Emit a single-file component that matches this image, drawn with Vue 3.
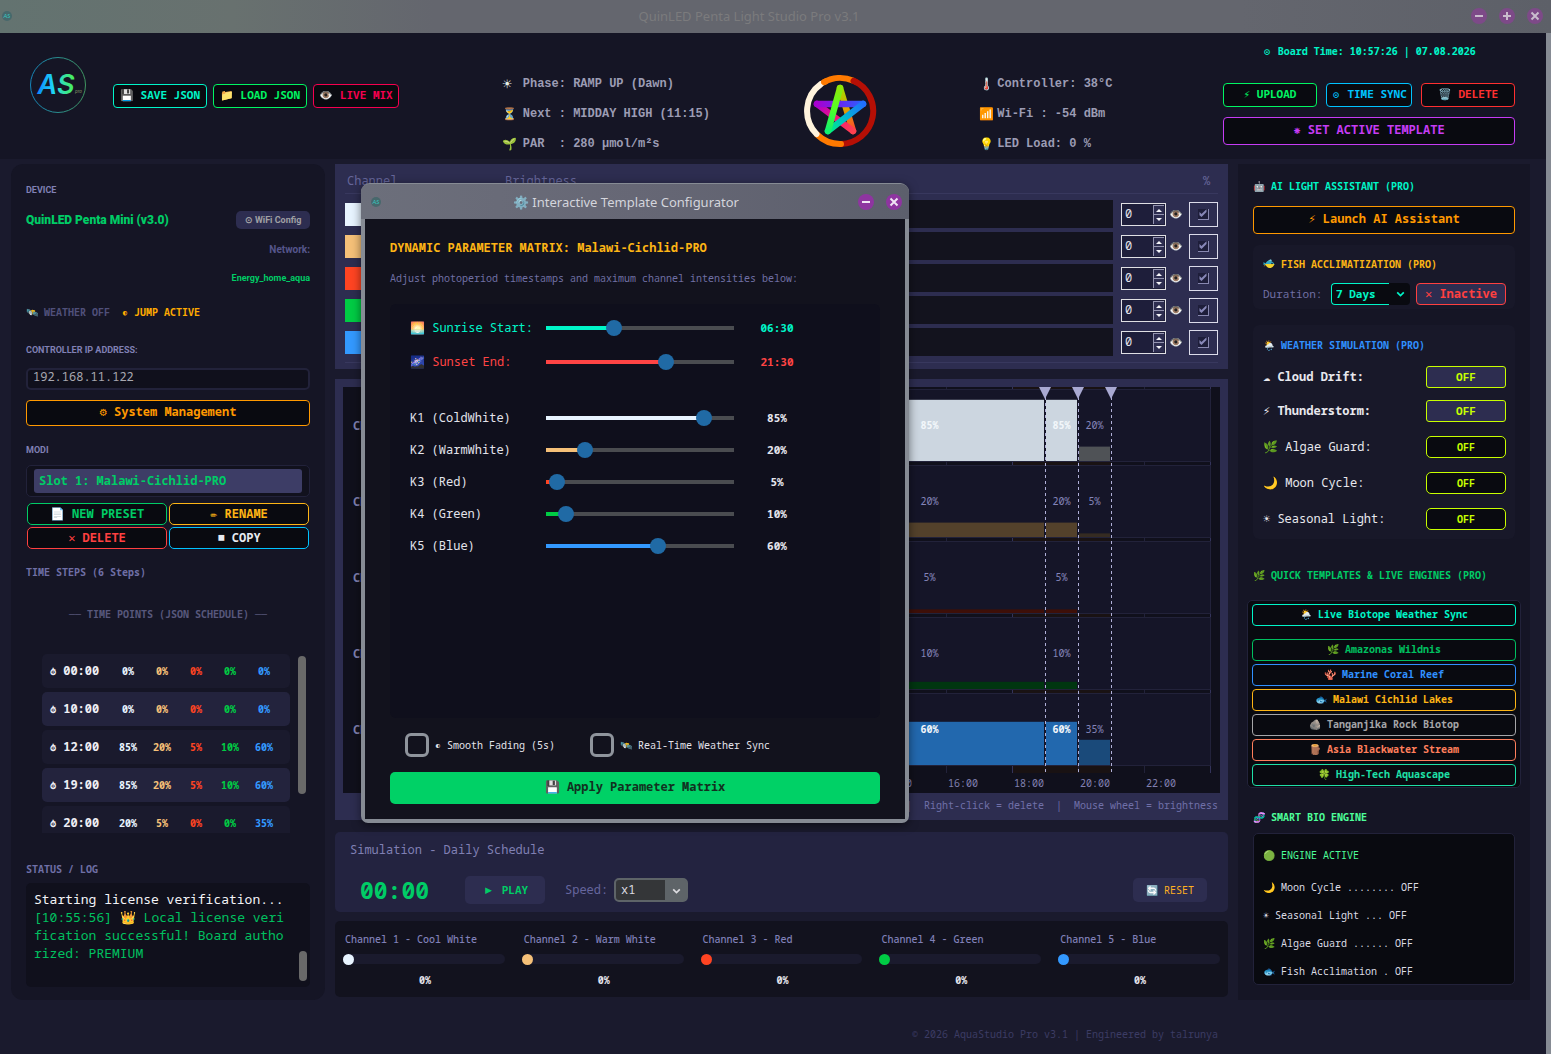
<template>
  <div class="window">
    <header class="titlebar">
      <svg class="mini-logo" viewBox="0 0 12 12">
        <circle cx="6" cy="6" r="5" fill="#47686c" />
        <text x="6" y="8" text-anchor="middle" font-size="6" fill="#35c9c4">AS</text>
      </svg>
      <h1>QuinLED Penta Light Studio Pro v3.1</h1>
      <div class="win-controls">
        <button aria-label="Minimize">
          <svg viewBox="0 0 16 16"><path d="M4 8h8" /></svg>
        </button>
        <button aria-label="Maximize">
          <svg viewBox="0 0 16 16"><path d="M4 8h8M8 4v8" /></svg>
        </button>
        <button aria-label="Close">
          <svg viewBox="0 0 16 16"><path d="M4.500 4.500l7 7M11.500 4.500l-7 7" /></svg>
        </button>
      </div>
    </header>

    <div class="app">
      <section class="topbar">
        <div class="brand">
          <svg class="logo" viewBox="0 0 56 56">
            <defs>
              <linearGradient id="ring" x1="0" x2="1">
                <stop offset="0" stop-color="#1583b8" />
                <stop offset="1" stop-color="#3f9560" />
              </linearGradient>
              <linearGradient id="mark" x1="0" x2="1">
                <stop offset="0" stop-color="#0a84ff" />
                <stop offset=".45" stop-color="#1fd6f5" />
                <stop offset="1" stop-color="#4df04d" />
              </linearGradient>
            </defs>
            <circle cx="28" cy="28" r="27.500" fill="none" stroke="url(#ring)" />
            <text class="logo-mark" x="26" y="37" text-anchor="middle" fill="url(#mark)">AS</text>
            <text class="logo-sub" x="45" y="36" fill="#7a8a60">pro</text>
          </svg>
          <div class="file-buttons">
            <button class="outline" style="--c: #00f5c8">💾 SAVE JSON</button>
            <button class="outline" style="--c: #00f562">📁 LOAD JSON</button>
            <button class="outline" style="--c: #f5004f">👁️ LIVE MIX</button>
          </div>
        </div>

        <dl class="status status-left">
          <div><dt>☀︎</dt><dd>Phase: RAMP UP (Dawn)</dd></div>
          <div><dt>⏳</dt><dd>Next : MIDDAY HIGH (11:15)</dd></div>
          <div><dt>🌱</dt><dd>PAR&nbsp; : 280 µmol/m²s</dd></div>
        </dl>

        <svg class="star" viewBox="0 0 74 74">
          <defs>
            <linearGradient
              v-for="g in starLines"
              :id="g.id"
              :key="g.id"
              gradientUnits="userSpaceOnUse"
              :x1="g.x1" :y1="g.y1" :x2="g.x2" :y2="g.y2"
            >
              <stop offset="0" :stop-color="g.from" />
              <stop offset=".5" :stop-color="g.mid" />
              <stop offset="1" :stop-color="g.to" />
            </linearGradient>
          </defs>
          <g fill="none" stroke-width="6" stroke-linecap="round">
            <path d="M50.500 6.800A33 33 0 0 1 38 70" stroke="#b50f05" />
            <path d="M38 70A33 33 0 0 1 14 60.500" stroke="#ff7a00" />
            <path d="M20 8.800A33 33 0 0 1 50.500 6.800" stroke="#ff7a00" stroke-linecap="butt" />
            <path d="M13.500 60A33 33 0 0 1 18 10" stroke="#fff3dd" />
            <path d="M21 8.200l2-1" stroke="#ff7a00" />
            <path d="M50.500 6.800l3 1.500" stroke="#b50f05" />
          </g>
          <g stroke-width="6.500" stroke-linecap="round">
            <line
              v-for="g in starLines"
              :key="g.id"
              :x1="g.x1" :y1="g.y1" :x2="g.x2" :y2="g.y2"
              :stroke="`url(#${g.id})`"
            />
          </g>
        </svg>

        <dl class="status status-right">
          <div><dt>🌡️</dt><dd>Controller: 38°C</dd></div>
          <div><dt>📶</dt><dd>Wi-Fi : -54 dBm</dd></div>
          <div><dt>💡</dt><dd>LED Load: 0 %</dd></div>
        </dl>

        <div class="board">
          <p class="board-time"><span class="glyph">⊙</span> Board Time: 10:57:26 | 07.08.2026</p>
          <div class="board-buttons">
            <button class="outline" style="--c: #00f562">⚡︎ UPLOAD</button>
            <button class="outline" style="--c: #00c3ff"><span class="glyph">⊙</span> TIME SYNC</button>
            <button class="outline" style="--c: #ff3030">🗑️ DELETE</button>
          </div>
          <button class="outline active-template" style="--c: #c63cf5">⁕ SET ACTIVE TEMPLATE</button>
        </div>
      </section>

      <main class="columns">
        <aside class="panel left">
          <h2 class="sans">DEVICE</h2>
          <div class="device-row">
            <strong>QuinLED Penta Mini (v3.0)</strong>
            <button class="wifi">⊙ WiFi Config</button>
          </div>
          <p class="network">Network:</p>
          <p class="network-name">Energy_home_aqua</p>
          <p class="flags"><span>🛰️ WEATHER OFF</span><span class="jump">◐ JUMP ACTIVE</span></p>
          <label class="sans ip-label" for="ip">CONTROLLER IP ADDRESS:</label>
          <input id="ip" v-model="ip" class="ip" type="text" />
          <button class="outline system" style="--c: #ff9900">⚙︎ System Management</button>
          <h2 class="sans modi">MODI</h2>
          <div class="slot"><button>Slot 1: Malawi-Cichlid-PRO</button></div>
          <div class="presets">
            <button class="outline" style="--c: #00cc66">📄 NEW PRESET</button>
            <button class="outline" style="--c: #fdb515">✏︎ RENAME</button>
            <button class="outline" style="--c: #ff4040">✕ DELETE</button>
            <button class="outline copy" style="--c: #00c3ff">■ COPY</button>
          </div>
          <h2 class="steps-title">TIME STEPS (6 Steps)</h2>
          <p class="points-title">── TIME POINTS (JSON SCHEDULE) ──</p>
          <div class="steps">
            <table>
              <tbody>
                <tr v-for="s in steps" :key="s.time">
                  <th scope="row"><span class="glyph">⏱︎</span> {{ s.time }}</th>
                  <td v-for="(v, i) in s.values" :key="i" :class="'c' + i">{{ v }}%</td>
                </tr>
              </tbody>
            </table>
            <div class="thumb"></div>
          </div>
          <h2 class="log-title">STATUS / LOG</h2>
          <div class="log">
            <p>Starting license verification...<br /><span>[10:55:56] 👑 Local license verification successful! Board authorized: PREMIUM</span></p>
            <div class="thumb"></div>
          </div>
        </aside>

        <div class="middle">
          <section class="channels">
            <div class="channels-head"><span>Channel</span><span>Brightness</span><span>%</span></div>
            <div v-for="c in channels" :key="c.name" class="channel-row">
              <i class="swatch" :style="{ background: c.color }"></i>
              <div class="level"></div>
              <div class="spin">
                <input v-model="c.level" type="number" :aria-label="c.name + ' percent'" />
                <button aria-label="Increase" @click="c.level++"><svg viewBox="0 0 6 3"><path d="M0 3h6L3 0z" /></svg></button>
                <button aria-label="Decrease" @click="c.level--"><svg viewBox="0 0 6 3"><path d="M0 0h6L3 3z" /></svg></button>
              </div>
              <span class="eye">👁️</span>
              <label class="visible"><input v-model="c.visible" type="checkbox" :aria-label="'Show ' + c.name" /></label>
            </div>
          </section>

          <section class="timeline">
            <svg class="chart" viewBox="0 0 877 406">
              <rect width="877" height="406" fill="#10101c" />
              <rect x="669" y="0" width="99" height="386" fill="#191213" />
              <path
                v-for="h in hours"
                :key="h"
                :d="`M${hx(h) + 0.5} 0V386`"
                :stroke="h % 6 ? '#22223a' : '#33335a'"
              />
              <g v-for="(c, i) in channels" :key="c.name">
                <rect x="75.500" :y="76 * i + 2.500" width="792" height="72" fill="#151528" stroke="#22223a" />
                <text class="row-name" x="10" :y="76 * i + 43">CH {{ i + 1 }}</text>
                <g v-for="(b, j) in c.bars" :key="j">
                  <rect
                    v-if="b.value"
                    :x="hx(b.start) + 1"
                    :y="76 * i + 74 - b.value * 0.72"
                    :width="(b.end - b.start) * 33 - 2"
                    :height="b.value * 0.72"
                    :fill="b.fill"
                  />
                  <text
                    v-if="b.value"
                    class="bar-label"
                    :class="{ bright: b.value >= 60 }"
                    :x="(hx(b.start) + hx(b.end)) / 2"
                    :y="76 * i + 42"
                  >{{ b.value }}%</text>
                </g>
              </g>
              <g v-for="h in [10, 12, 19, 20, 21]" :key="h">
                <path :d="`M${hx(h) + 0.5} 10V386`" stroke="#b0b0d8" stroke-dasharray="3 3" />
                <path :d="`M${hx(h) - 6} 0h12l-6 12z`" fill="#a9a9d2" />
              </g>
              <text v-for="h in hours.slice(7, -1)" :key="h" class="axis" :x="hx(h) + 2" y="400">{{ h }}:00</text>
            </svg>
            <p class="hint">|&nbsp; Right-click = delete&nbsp; |&nbsp; Mouse wheel = brightness</p>
          </section>

          <section class="simulation">
            <h2>Simulation - Daily Schedule</h2>
            <div class="sim-row">
              <output class="clock">00:00</output>
              <button class="play">▶ PLAY</button>
              <label for="speed">Speed:</label>
              <div class="speed">
                <select id="speed"><option>x1</option><option>x10</option></select>
                <svg viewBox="0 0 10 10"><path d="M2 4l3 3 3-3" /></svg>
              </div>
              <button class="reset">🔄 RESET</button>
            </div>
          </section>

          <section class="meters">
            <div v-for="(c, i) in channels" :key="c.name" class="meter">
              <label :for="'meter' + i">Channel {{ i + 1 }} - {{ c.name }}</label>
              <input :id="'meter' + i" v-model="c.level" type="range" min="0" max="100" :style="{ '--c': c.color }" />
              <span>{{ c.level }}%</span>
            </div>
          </section>
        </div>

        <aside class="panel right">
          <h2 class="teal">🤖 AI LIGHT ASSISTANT (PRO)</h2>
          <button class="outline launch" style="--c: #ff9900">⚡︎ Launch AI Assistant</button>

          <section class="card fish">
            <h2>
              <svg class="fish-icon" viewBox="0 0 12 12">
                <path d="M.500 4l2 1.500C4 2.500 6 1.800 8 3c2 .8 3 2 3.500 3.500H2.500L.500 7z" fill="#35a9c4" />
                <path d="M2.500 6h9C10.500 9 8.500 10.200 6.500 10 4.500 9.900 3.500 8.500 2.500 7L.500 9z" fill="#f2d02c" />
                <path d="M5 2.500l3-1.300 1 2z" fill="#7fd4e4" />
                <circle cx="9" cy="5.500" r=".8" fill="#12202c" />
              </svg>
              FISH ACCLIMATIZATION (PRO)
            </h2>
            <div class="fish-row">
              <label for="duration">Duration:</label>
              <div class="duration">
                <select id="duration"><option>7 Days</option><option>14 Days</option></select>
                <i></i>
                <svg viewBox="0 0 10 10"><path d="M2 4l3 3 3-3" /></svg>
              </div>
              <button class="outline inactive" style="--c: #ff4040">✕ Inactive</button>
            </div>
          </section>

          <section class="card weather">
            <h2>🌦️ WEATHER SIMULATION (PRO)</h2>
            <div v-for="w in weather" :key="w.label" class="weather-row" :class="{ strong: w.strong }">
              <span>{{ w.label }}</span>
              <button :aria-label="w.label + ' OFF'">OFF</button>
            </div>
          </section>

          <h2 class="quick-title">🌿 QUICK TEMPLATES &amp; LIVE ENGINES (PRO)</h2>
          <div class="quick">
            <button v-for="t in templates" :key="t.label" class="outline" :style="{ '--c': t.color }">{{ t.label }}</button>
          </div>

          <h2 class="bio-title">🧬 SMART BIO ENGINE</h2>
          <div class="bio">
            <p class="bio-active">🟢 ENGINE ACTIVE</p>
            <p>🌙 Moon Cycle ........ OFF</p>
            <p>☀︎ Seasonal Light ... OFF</p>
            <p>🌿 Algae Guard ...... OFF</p>
            <p>🐟 Fish Acclimation . OFF</p>
          </div>
        </aside>
      </main>

      <footer class="columns footer"><p>© 2026 AquaStudio Pro v3.1 | Engineered by talrunya</p></footer>
    </div>

    <div class="dialog" role="dialog" aria-labelledby="dialog-title">
      <header class="dialog-bar">
        <svg class="mini-logo" viewBox="0 0 12 12">
          <circle cx="6" cy="6" r="5" fill="#47686c" />
          <text x="6" y="8" text-anchor="middle" font-size="6" fill="#35c9c4">AS</text>
        </svg>
        <h2 id="dialog-title">⚙️ Interactive Template Configurator</h2>
        <div class="win-controls">
          <button aria-label="Minimize dialog"><svg viewBox="0 0 16 16"><path d="M4 8h8" /></svg></button>
          <button aria-label="Close dialog"><svg viewBox="0 0 16 16"><path d="M4.500 4.500l7 7M11.500 4.500l-7 7" /></svg></button>
        </div>
      </header>
      <div class="dialog-body">
        <h3>DYNAMIC PARAMETER MATRIX: Malawi-Cichlid-PRO</h3>
        <p class="intro">Adjust photoperiod timestamps and maximum channel intensities below:</p>
        <div class="matrix">
          <div
            v-for="(p, i) in params"
            :key="p.label"
            class="param"
            :class="{ time: p.time }"
            :style="{ '--c': p.color, '--v': p.value + '%' }"
          >
            <label :for="'param' + i">{{ p.label }}</label>
            <input :id="'param' + i" v-model="p.value" type="range" min="0" max="100" />
            <output>{{ p.time || p.value + '%' }}</output>
          </div>
        </div>
        <div class="options">
          <label><input type="checkbox" />◐ Smooth Fading (5s)</label>
          <label><input type="checkbox" />🛰️ Real-Time Weather Sync</label>
        </div>
        <button class="apply">💾 Apply Parameter Matrix</button>
      </div>
    </div>
  </div>
</template>

<script setup>
import { ref } from 'vue'

const ip = ref('192.168.11.122')

// chart x position of an hour
const hx = (h) => 75 + 33 * h
const hours = Array.from({ length: 13 }, (_, i) => i * 2)

const steps = [
  { time: '00:00', values: [0, 0, 0, 0, 0] },
  { time: '10:00', values: [0, 0, 0, 0, 0] },
  { time: '12:00', values: [85, 20, 5, 10, 60] },
  { time: '19:00', values: [85, 20, 5, 10, 60] },
  { time: '20:00', values: [20, 5, 0, 0, 35] }
]

const bars = (high, low, fill, dimFill) => [
  { start: 12, end: 19, value: high, fill },
  { start: 19, end: 20, value: high, fill },
  { start: 20, end: 21, value: low, fill: dimFill }
]

const channels = ref([
  { name: 'Cool White', color: '#e8f4ff', bars: bars(85, 20, '#ccd6e0', '#4f5256') },
  { name: 'Warm White', color: '#f5c078', bars: bars(20, 5, '#53412b', '#352b22') },
  { name: 'Red', color: '#ff4422', bars: bars(5, 0, '#3e0f08') },
  { name: 'Green', color: '#00cc44', bars: bars(10, 0, '#003610') },
  { name: 'Blue', color: '#3399ff', bars: bars(60, 35, '#2268ae', '#1a4a7a') }
].map((c) => ({ ...c, level: 0, visible: true })))

const weather = [
  { label: '☁︎ Cloud Drift:', strong: true },
  { label: '⚡︎ Thunderstorm:', strong: true },
  { label: '🌿 Algae Guard:' },
  { label: '🌙 Moon Cycle:' },
  { label: '☀︎ Seasonal Light:' }
]

const templates = [
  { label: '🌦️ Live Biotope Weather Sync', color: '#00f5c8' },
  { label: '🌿 Amazonas Wildnis', color: '#00c060' },
  { label: '🪸 Marine Coral Reef', color: '#3090ff' },
  { label: '🐟 Malawi Cichlid Lakes', color: '#fdb515' },
  { label: '🪨 Tanganjika Rock Biotop', color: '#a5a5a8' },
  { label: '🪵 Asia Blackwater Stream', color: '#ff7f5c' },
  { label: '🍀 High-Tech Aquascape', color: '#1fe0a8' }
]

const params = ref([
  { label: '🌅 Sunrise Start:', color: '#00f5c8', value: 36, time: '06:30' },
  { label: '🌌 Sunset End:', color: '#ff4444', value: 64, time: '21:30' },
  { label: 'K1 (ColdWhite)', color: '#e8f4ff', value: 85 },
  { label: 'K2 (WarmWhite)', color: '#f5c078', value: 20 },
  { label: 'K3 (Red)', color: '#ff4422', value: 5 },
  { label: 'K4 (Green)', color: '#00cc44', value: 10 },
  { label: 'K5 (Blue)', color: '#3399ff', value: 60 }
])

const starLines = [
  { id: 's1', x1: 37, y1: 14, x2: 50, y2: 57, from: '#9ee000', mid: '#e0a000', to: '#ff4430' },
  { id: 's2', x1: 50, y1: 57, x2: 14, y2: 30, from: '#ff4050', mid: '#f5107a', to: '#a800d0' },
  { id: 's3', x1: 14, y1: 30, x2: 60, y2: 30.01, from: '#a800d0', mid: '#6628f0', to: '#2862ff' },
  { id: 's4', x1: 60, y1: 30, x2: 25, y2: 57, from: '#2070ff', mid: '#00b8d0', to: '#00f080' },
  { id: 's5', x1: 25, y1: 57, x2: 37, y2: 14, from: '#10f070', mid: '#50ff28', to: '#90e808' }
]
</script>

<style>
body {
  background: #1a1a2d;
}
</style>

<style scoped>
* {
  box-sizing: border-box;
}

h1, h2, h3, p, dl, dd {
  margin: 0;
}

button, input, select {
  font: inherit;
  color: inherit;
  margin: 0;
}

button {
  padding: 0;
  border: 0;
  cursor: pointer;
  white-space: nowrap;
}

.window {
  position: relative;
  min-height: 100vh;
  display: flex;
  flex-direction: column;
  background: #1a1a2d;
  color: #e4e4ec;
  font: 10px/20px "Noto Sans Mono", "DejaVu Sans Mono", monospace;
}

.titlebar {
  display: flex;
  align-items: center;
  height: 33px;
  padding: 0 8px 2px 1px;
  background: linear-gradient(90deg, #637370, #68716f 15%, #64666e 28%, #64666e 80%, #5d6068);
}

.mini-logo {
  width: 12px;
  height: 12px;
  font-family: Lato, sans-serif;
  font-style: italic;
}

h1 {
  flex: 1;
  padding-left: 14px;
  text-align: center;
  font: 13px/20px "Noto Sans", sans-serif;
  color: #7b7b7d;
}

.win-controls {
  display: flex;
  gap: 12px;
}

.win-controls button {
  width: 16px;
  height: 16px;
  border-radius: 8px;
  background: #7d4a88;
}

.win-controls svg {
  display: block;
  stroke: #c9bccd;
  stroke-width: 2;
}

.glyph {
  font-size: 8px;
}

.app {
  flex: 1;
  border-right: 5px solid #868b94;
}

.topbar {
  display: flex;
  justify-content: space-between;
  height: 126px;
  padding: 0 31px 0 30px;
  background: #151525;
}

.brand {
  display: flex;
  align-items: flex-start;
  gap: 27px;
  padding-top: 24px;
}

.logo {
  width: 56px;
  height: 56px;
}

.logo-mark {
  font: italic 600 27px Inter, sans-serif;
}

.logo-sub {
  font: italic 5px Lato, sans-serif;
}

.outline {
  height: 24px;
  padding-bottom: 2px;
  border: 1px solid var(--c);
  border-radius: 4px;
  background: #090a10;
  color: var(--c);
  font-size: 12px;
  line-height: 20px;
  font-weight: 700;
}

.file-buttons .outline,
.board-buttons .outline {
  font-size: 11px;
}

.file-buttons {
  display: flex;
  gap: 6px;
  padding-top: 27px;
}

.file-buttons button {
  width: 94px;
}

.file-buttons button:last-child {
  width: 86px;
}

.status {
  padding-top: 41px;
  font: 700 12px/20px "Liberation Mono", monospace;
  color: #9c9cb4;
  white-space: nowrap;
}

.status div {
  display: flex;
  margin-bottom: 10px;
}

.status dt {
  flex: none;
  width: 21px;
  color: #e8f0e8;
  font-family: "DejaVu Sans", sans-serif;
  font-weight: 400;
}

.status-left {
  width: 198px;
}

.status-right {
  width: 141px;
}

.status-right dt {
  width: 18px;
}

.star {
  width: 74px;
  height: 74px;
  margin-top: 41px;
}

.board {
  width: 292px;
}

.board-time {
  padding: 8px 0;
  height: 50px;
  text-align: center;
  font-weight: 700;
  color: #00f5c8;
}

.board-buttons {
  display: grid;
  grid-template-columns: 94fr 86fr 94fr;
  gap: 9px;
}

.active-template {
  width: 100%;
  height: 28px;
  margin-top: 10px;
}

.columns {
  display: grid;
  grid-template-columns: 314px minmax(0, 1fr) 292px;
  gap: 10px;
  padding: 5px 16px 0 11px;
}

.panel {
  background: #151525;
}

.panel h2,
.simulation h2 {
  font-size: 10px;
  line-height: 20px;
  white-space: nowrap;
}

/* left column */

.left {
  display: flex;
  flex-direction: column;
  padding: 15px 15px 13px;
  border-radius: 12px;
  color: #6f6fa6;
}

.left h2.sans,
.sans {
  height: 20px;
  font: 700 9px/22px Roboto, sans-serif;
  color: #8080b4;
}

.device-row {
  display: flex;
  justify-content: space-between;
  align-items: center;
  height: 22px;
  margin-top: 10px;
  font: 700 12px/22px Roboto, sans-serif;
  color: #00cc66;
}

.wifi {
  width: 74px;
  height: 18px;
  border-radius: 5px;
  background: #2d2d50;
  color: #a0a0a4;
  font-size: 9px;
  line-height: 18px;
}

.network,
.network-name {
  height: 20px;
  margin-top: 8px;
  text-align: right;
  font: 700 10px/22px Roboto, sans-serif;
  color: #55558c;
}

.network-name {
  font-size: 9px;
  color: #00cc66;
}

.flags {
  display: flex;
  gap: 12px;
  margin-top: 15px;
  font-weight: 700;
  color: #50507a;
}

.jump {
  color: #ffaa00;
}

.ip-label {
  margin-top: 17px;
}

.ip {
  height: 22px;
  margin-top: 9px;
  padding: 0 5px 6px;
  border: 2px solid #22223a;
  border-radius: 5px;
  background: #10101c;
  color: #a8a8b0;
  font-size: 12px;
  line-height: 12px;
}

.system {
  height: 26px;
  margin-top: 10px;
}

.modi {
  margin-top: 13px;
}

.slot {
  height: 32px;
  margin-top: 6px;
  padding: 3px 7px;
  border: 1px solid #22223a;
  border-radius: 5px;
  background: #11111d;
}

.slot button {
  width: 100%;
  height: 24px;
  padding-left: 5px;
  border-radius: 3px;
  background: #3d3d66;
  color: #00cc66;
  text-align: left;
  font-size: 12px;
  font-weight: 700;
}

.presets {
  display: grid;
  grid-template-columns: 1fr 1fr;
  gap: 2px;
  margin: 6px 1px 0;
}

.presets button {
  height: 22px;
  padding-bottom: 0;
  border-radius: 5px;
}

.presets .copy {
  color: #e8eaf0;
}

.steps-title {
  margin-top: 13px;
}

.points-title {
  margin-top: 22px;
  text-align: center;
  font-weight: 700;
  color: #58587c;
}

.steps {
  display: flex;
  gap: 8px;
  height: 179px;
  margin: 30px 4px 0 16px;
  overflow: hidden;
}

.steps table {
  flex: 1;
  height: 194px;
  margin-top: -4px;
  table-layout: fixed;
  border-collapse: separate;
  border-spacing: 0 4px;
  font-weight: 700;
}

.steps tr {
  background: #1a1a2d;
}

.steps tr:nth-child(even) {
  background: #23233d;
}

.steps th {
  width: 69px;
  height: 34px;
  padding: 0 0 0 8px;
  border-radius: 5px 0 0 5px;
  text-align: left;
  font-size: 12px;
  color: #eeeef4;
  white-space: nowrap;
}

.steps td {
  width: 34px;
  padding: 0;
  text-align: center;
}

.steps td:last-child {
  width: 43px;
  padding-right: 9px;
  border-radius: 0 5px 5px 0;
}

.c0 { color: #e8f4ff; }
.c1 { color: #f5c078; }
.c2 { color: #ff4422; }
.c3 { color: #00cc44; }
.c4 { color: #3399ff; }

.thumb {
  width: 8px;
  height: 138px;
  margin-top: 2px;
  border-radius: 4px;
  background: #696969;
}

.log-title {
  margin-top: 26px;
}

.log {
  display: flex;
  justify-content: space-between;
  height: 104px;
  margin-top: 4px;
  padding: 7px 3px 6px 8px;
  border-radius: 5px;
  background: #10101c;
  color: #f4f4f8;
  font-size: 13px;
  line-height: 18px;
}

.log p {
  width: 256px;
  word-break: break-all;
}

.log p span {
  color: #00c060;
}

.log .thumb {
  align-self: flex-end;
  height: 30px;
}

/* middle column */

.channels,
.timeline {
  background: #2d2d50;
}

.channels {
  height: 205px;
  padding: 6px 10px;
}

.channels-head {
  display: grid;
  grid-template-columns: 158px 1fr 15px;
  height: 24px;
  padding-left: 2px;
  border-bottom: 1px solid #38385e;
  font-size: 12px;
  line-height: 22px;
  color: #66669a;
}

.channel-row {
  display: grid;
  grid-template-columns: 160px 1fr 45px 18px 5px 29px;
  align-items: center;
  height: 28px;
  margin-top: 4px;
}

.channels-head + .channel-row {
  margin-top: 6px;
}

.channel-row:last-child {
  height: 35px;
  padding-bottom: 7px;
  border-bottom: 1px solid #38385e;
}

.swatch {
  width: 23px;
  height: 23px;
}

.level {
  height: 28px;
  margin-right: 8px;
  background: #13131e;
}

.spin {
  display: grid;
  grid-template-columns: 1fr 11px;
  grid-template-rows: 1fr 1fr;
  height: 23px;
  padding: 1px;
  border: 1px solid #e0e0e4;
  background: #1e1e3a;
}

.spin input {
  grid-row: 1 / 3;
  min-width: 0;
  padding: 0 2px;
  border: 0;
  background: none;
  font-size: 12px;
  appearance: textfield;
}

.spin input::-webkit-inner-spin-button {
  appearance: none;
}

.spin button {
  border: solid #9494b0;
  border-width: 1px 0 0 1px;
  background: #2d2d50;
  line-height: 0;
}

.spin svg {
  width: 6px;
  fill: #f4f4f8;
}

.eye {
  text-align: right;
  font-size: 11px;
  margin-right: 1px;
}

.visible {
  grid-column: 6;
  display: grid;
  place-items: center;
  height: 25px;
  border: 1px solid #dcdcea;
}

.visible input {
  width: 11px;
  height: 11px;
  appearance: none;
  border: solid #8888b0;
  border-width: 0 1px 1px 0;
  background: #1e1e3a;
}

.visible input:checked::after {
  content: "";
  display: block;
  width: 10px;
  height: 9px;
  background: #8888b8;
  clip-path: polygon(15% 40%, 35% 60%, 85% 8%, 85% 40%, 35% 95%, 15% 75%);
}

.timeline {
  margin-top: 10px;
  padding: 8px 8px 5px;
}

.chart {
  display: block;
  width: 100%;
}

.chart text {
  fill: #8080b0;
  font-size: 10px;
}

.chart .row-name {
  font-size: 12px;
  font-weight: 700;
}

.chart .bar-label {
  text-anchor: middle;
  fill: #8484b8;
}

.chart .bright {
  fill: #f2f6fa;
  font-weight: 700;
}

.hint {
  height: 22px;
  padding: 2px 2px 0;
  text-align: right;
  white-space: nowrap;
  color: #7070a8;
}

.simulation {
  height: 80px;
  margin-top: 12px;
  padding: 8px 21px 8px 15px;
  border-radius: 5px;
  background: #232340;
}

.simulation h2 {
  font-size: 12px;
  font-weight: 400;
  color: #8080b4;
}

.sim-row {
  display: flex;
  align-items: center;
  height: 28px;
  margin-top: 16px;
  padding-left: 10px;
  font-size: 12px;
  color: #66669e;
}

.clock {
  width: 105px;
  font-size: 23px;
  font-weight: 700;
  color: #00cc66;
}

.play,
.reset {
  width: 80px;
  height: 28px;
  border-radius: 5px;
  background: #2d2d50;
  color: #00cc66;
  font-size: 11px;
  font-weight: 700;
}

.sim-row label {
  width: 49px;
  margin-left: 20px;
}

.speed {
  position: relative;
  width: 74px;
  height: 24px;
  border: 2px solid #5e6468;
  border-radius: 5px;
  background: linear-gradient(90deg, #343638 49px, #5e6468 49px);
}

.speed select,
.duration select {
  width: 100%;
  height: 100%;
  padding: 0 5px;
  border: 0;
  background: none;
  color: #dcdce0;
  font-size: 12px;
  appearance: none;
}

.speed svg,
.duration svg {
  position: absolute;
  top: 5px;
  right: 4px;
  width: 11px;
  height: 11px;
  fill: none;
  stroke: #dcdce0;
  stroke-width: 1.500;
  pointer-events: none;
}

.reset {
  width: 74px;
  height: 24px;
  margin-left: auto;
  font-size: 10px;
  font-weight: 400;
  color: #ffb020;
}

.meters {
  display: grid;
  grid-template-columns: repeat(5, 1fr);
  column-gap: 19px;
  height: 76px;
  margin-top: 9px;
  padding: 8px 8px 0 10px;
  border-radius: 5px;
  background: #12121e;
}

.meter {
  display: flex;
  flex-direction: column;
  text-align: center;
  font-weight: 700;
}

.meter label {
  text-align: left;
  font-weight: 500;
  color: #8080b8;
  white-space: nowrap;
}

.meter span {
  margin-top: 6px;
}

.meter input {
  height: 10px;
  margin: 5px 0 0 -2px;
  border-radius: 5px;
  appearance: none;
  background: #1a1a2d;
}

.meter input::-webkit-slider-thumb {
  width: 11px;
  height: 11px;
  border-radius: 6px;
  appearance: none;
  background: var(--c);
}

/* right column */

.right {
  padding: 12px 15px 0;
}

.teal {
  color: #00f5c8;
}

.launch {
  width: 100%;
  height: 28px;
  margin-top: 10px;
}

.card {
  border-radius: 6px;
  background: #181829;
}

.fish {
  height: 64px;
  margin-top: 11px;
  padding: 9px 9px 0 10px;
}

.fish h2 {
  display: flex;
  align-items: center;
  gap: 6px;
  color: #fdb515;
}

.fish-icon {
  width: 12px;
  height: 12px;
}

.fish-row {
  display: flex;
  align-items: center;
  margin-top: 9px;
  font-size: 12px;
  color: #7070a4;
}

.fish-row label {
  font-size: 11px;
}

.duration {
  position: relative;
  width: 79px;
  height: 22px;
  margin: 0 6px 0 auto;
  border-radius: 4px;
  background: #090a10;
}

.duration select {
  color: #00f5c8;
  font-size: 11px;
  font-weight: 700;
}

.duration i {
  position: absolute;
  inset: 0 21px 0 0;
  border: 1px solid #00f5c8;
  border-right: 0;
  border-radius: 4px 0 0 4px;
  pointer-events: none;
}

.duration svg {
  stroke: #00f5c8;
}

.inactive {
  width: 90px;
  height: 22px;
  padding-bottom: 0;
  background: #2d2d50;
}

.weather {
  height: 214px;
  margin-top: 16px;
  padding: 10px 9px 0 10px;
}

.weather h2 {
  color: #3090ff;
}

.weather-row {
  display: flex;
  justify-content: space-between;
  align-items: center;
  height: 22px;
  margin-top: 14px;
  font-size: 12px;
  color: #e8e8ee;
}

.weather-row.strong {
  margin-top: 12px;
  font-weight: 700;
}

h2 + .weather-row.strong {
  margin-top: 11px;
}

.weather-row button {
  width: 80px;
  height: 22px;
  border: 1px solid #c8ff00;
  border-radius: 5px;
  background: #090a10;
  color: #c8ff00;
  font-size: 10px;
  font-weight: 700;
}

.weather-row.strong button {
  border-radius: 3px;
  background: #2d2d50;
  font-size: 11px;
}

.quick-title {
  margin-top: 26px;
  color: #00cc66;
}

.quick {
  display: grid;
  gap: 3px;
  margin: 15px -6px 0;
  padding: 3px 4px 1px;
  border: 1px solid #22223a;
  border-radius: 5px;
  background: #090a10;
}

.quick button {
  height: 22px;
  padding-bottom: 3px;
  font-size: 10px;
  line-height: 16px;
}

.quick button:first-child {
  margin-bottom: 10px;
}

.bio-title {
  margin-top: 19px;
  color: #4dff9a;
}

.bio {
  height: 152px;
  margin-top: 6px;
  padding: 11px 9px 0;
  border: 1px solid #22223a;
  border-radius: 5px;
  background: #090a10;
  color: #dcdce4;
}

.bio p {
  margin-bottom: 8px;
}

.bio .bio-active {
  margin-bottom: 12px;
  color: #4dff9a;
}

.footer {
  padding-top: 24px;
  color: #3c3c64;
}

.footer p {
  grid-column: 2;
  padding-right: 10px;
  text-align: right;
}

/* floating configurator window */

.dialog {
  position: absolute;
  top: 183px;
  left: 361px;
  width: 548px;
  border: 4px solid #868b94;
  border-top-width: 1px;
  border-radius: 9px 9px 7px 7px;
  background: #868b94;
  box-shadow: 0 2px 10px rgb(0 0 0 / 50%);
}

.dialog-bar {
  display: flex;
  align-items: center;
  height: 35px;
  margin: 0 -4px;
  padding: 0 7px 0 9px;
  border-radius: 8px 8px 0 0;
  background: linear-gradient(90deg, #6c6f7b, #666775 50%, #5c5f6c);
}

.dialog-bar h2 {
  flex: 1;
  padding-left: 12px;
  text-align: center;
  font: 13px/20px "Noto Sans", sans-serif;
  color: #d4d5dc;
}

.dialog .win-controls button {
  background: #8e35a0;
}

.dialog .win-controls svg {
  stroke: #f0e4f4;
}

.dialog-body {
  height: 600px;
  padding: 19px 25px 0;
  background: #12121d;
}

.dialog h3 {
  font-size: 12px;
  line-height: 20px;
  color: #fdb515;
}

.intro {
  margin-top: 10px;
  color: #7070a4;
}

.matrix {
  height: 414px;
  margin-top: 16px;
  padding: 14px 20px 0;
  border-radius: 6px;
  background: #0f0f1c;
}

.param {
  display: grid;
  grid-template-columns: 130px 200px 74px;
  align-items: center;
  height: 20px;
  margin-bottom: 12px;
  font-size: 12px;
  white-space: nowrap;
}

.param.time {
  margin-bottom: 14px;
  color: var(--c);
}

.param.time + .param:not(.time) {
  margin-top: 36px;
}

.param output {
  text-align: center;
  font-size: 11px;
  font-weight: 700;
}

.param input {
  height: 16px;
  appearance: none;
  background: linear-gradient(90deg, var(--c) var(--v), #4a4c50 var(--v)) center / calc(100% - 12px) 4px no-repeat;
}

.param input::-webkit-slider-thumb {
  width: 16px;
  height: 16px;
  border-radius: 8px;
  appearance: none;
  background: #206aa5;
}

.options {
  display: flex;
  height: 24px;
  margin-top: 15px;
  padding-left: 15px;
}

.options label {
  display: flex;
  align-items: center;
  gap: 6px;
  width: 185px;
  white-space: nowrap;
}

.options input {
  width: 24px;
  height: 24px;
  appearance: none;
  border: 3px solid #8f949c;
  border-radius: 6px;
}

.apply {
  width: 100%;
  height: 32px;
  margin-top: 15px;
  padding-bottom: 2px;
  border-radius: 5px;
  background: #00d166;
  color: #12301f;
  font-size: 12px;
  font-weight: 700;
}
</style>
